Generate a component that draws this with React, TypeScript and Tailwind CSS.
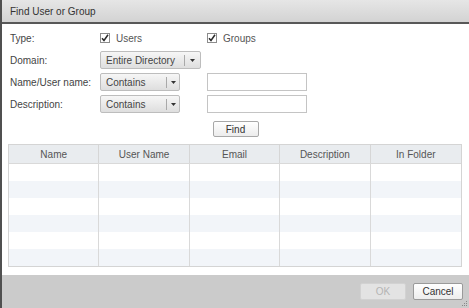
import React from 'react';

const COLUMNS = ['Name', 'User Name', 'Email', 'Description', 'In Folder'];

function Checkbox({ label }: { label: string }) {
  return (
    <label className="flex items-center gap-[6px]">
      <span className="flex h-[10px] w-[10px] items-center justify-center border border-[#8c8c8c] bg-white">
        <svg width="8" height="8" viewBox="0 0 8 8">
          <path d="M1 4.2 L3 6.5 L7 0.8" fill="none" stroke="#2b2b2b" strokeWidth="1.5" />
        </svg>
      </span>
      <span className="text-[#555]">{label}</span>
    </label>
  );
}

function Dropdown({ value, width, textWidth }: { value: string; width: string; textWidth: string }) {
  return (
    <div
      className={`flex h-[18px] ${width} items-center rounded-[2px] border border-[#bdbdbd] bg-gradient-to-b from-[#f6f6f6] to-[#dedede] text-[#444]`}
    >
      <span className={`${textWidth} pl-[5px]`}>{value}</span>
      <span className="h-[11px] w-px bg-[#a9a9a9]" />
      <span className="flex flex-1 justify-center">
        <svg width="5" height="3" viewBox="0 0 5 3">
          <path d="M0 0 H5 L2.5 3 Z" fill="#333" />
        </svg>
      </span>
    </div>
  );
}

function FieldRow({ label, children }: { label: string; children: React.ReactNode }) {
  return (
    <div className="flex h-[18px] items-center">
      <span className="w-[90px] text-[#444]">{label}</span>
      {children}
    </div>
  );
}

export default function App() {
  return (
    <div
      className="flex h-[308px] w-[469px] flex-col overflow-hidden border-l-2 border-[#505050] bg-white text-[10px]"
      style={{ fontFamily: '"Liberation Sans", Arial, sans-serif' }}
    >
      {/* Title bar */}
      <div className="flex h-[24px] shrink-0 items-center border-b-2 border-[#585858] bg-gradient-to-b from-[#e6e6e6] to-[#d3d3d3] pl-[8px] text-[#333]">
        Find User or Group
      </div>

      {/* Body */}
      <div className="flex flex-1 flex-col pt-[5px]">
        <div className="flex flex-col gap-[4px] pl-[8px]">
          <FieldRow label="Type:">
            <div className="w-[107px]">
              <Checkbox label="Users" />
            </div>
            <Checkbox label="Groups" />
          </FieldRow>
          <FieldRow label="Domain:">
            <Dropdown value="Entire Directory" width="w-[101px]" textWidth="w-[83px]" />
          </FieldRow>
          <FieldRow label="Name/User name:">
            <Dropdown value="Contains" width="w-[80px]" textWidth="w-[65px]" />
            <input className="ml-[27px] h-[18px] w-[100px] border border-[#c4c4c4] bg-white outline-none" />
          </FieldRow>
          <FieldRow label="Description:">
            <Dropdown value="Contains" width="w-[80px]" textWidth="w-[65px]" />
            <input className="ml-[27px] h-[18px] w-[100px] border border-[#c4c4c4] bg-white outline-none" />
          </FieldRow>
        </div>

        <div className="mt-[8px] flex justify-center">
          <button className="h-[16px] w-[46px] rounded-[2px] border border-[#a8a8a8] bg-gradient-to-b from-white to-[#ececec] text-[#333]">
            Find
          </button>
        </div>

        {/* Results table */}
        <div className="ml-[6px] mr-[7px] mt-[7px] border border-[#d4d4d4]">
          <div className="grid h-[19px] grid-cols-5 border-b border-[#d9d9d9] bg-[#e9ecef] text-[#555]">
            {COLUMNS.map((col, i) => (
              <div
                key={col}
                className={`flex items-center justify-center ${i < 4 ? 'border-r border-[#d6d6d6]' : ''}`}
              >
                {col}
              </div>
            ))}
          </div>
          {[0, 1, 2, 3, 4, 5].map((row) => (
            <div
              key={row}
              className={`grid h-[17px] grid-cols-5 ${row % 2 === 0 ? 'bg-white' : 'bg-[#f2f5f9]'}`}
            >
              {COLUMNS.map((col, i) => (
                <div key={col} className={i < 4 ? 'border-r border-[#d9d9d9]' : ''} />
              ))}
            </div>
          ))}
        </div>
      </div>

      {/* Footer */}
      <div className="relative flex h-[33px] shrink-0 items-start justify-end gap-[7px] bg-[#cbcbcb] pr-[6px] pt-[8px]">
        <button className="h-[17px] w-[46px] rounded-[2px] border border-[#d2d2d2] bg-[#e3e3e3] text-[#b4b4b4]">
          OK
        </button>
        <button className="h-[17px] w-[50px] rounded-[2px] border border-[#9a9a9a] bg-gradient-to-b from-white to-[#ededed] text-[#333]">
          Cancel
        </button>
        <svg className="absolute bottom-[1px] right-[1px]" width="7" height="7" viewBox="0 0 7 7">
          <rect x="5" y="1" width="1" height="1" fill="#888" />
          <rect x="3" y="3" width="1" height="1" fill="#888" />
          <rect x="5" y="3" width="1" height="1" fill="#888" />
          <rect x="1" y="5" width="1" height="1" fill="#888" />
          <rect x="3" y="5" width="1" height="1" fill="#888" />
          <rect x="5" y="5" width="1" height="1" fill="#888" />
        </svg>
      </div>
    </div>
  );
}
